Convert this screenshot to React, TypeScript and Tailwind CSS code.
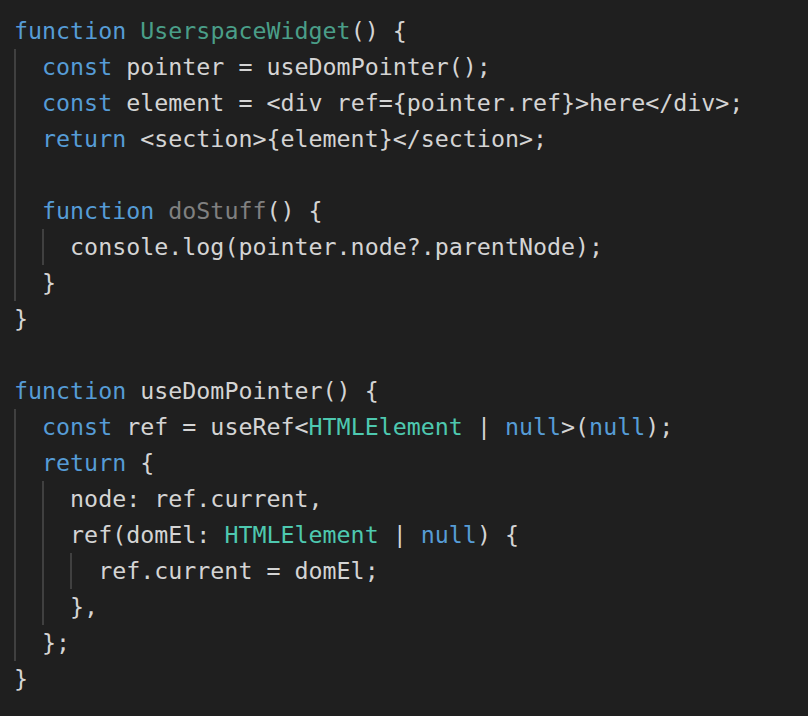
type Tok = [string, string?];

const KW = "text-[#569cd6]";
const TY = "text-[#4ec9b0]";
const FN = "text-[#4a9e88]";
const DIM = "text-[#808080]";

// each line: indent level, then tokens
const lines: { indent: number; toks: Tok[] }[] = [
  { indent: 0, toks: [["function", KW], [" "], ["UserspaceWidget", FN], ["() {"]] },
  { indent: 1, toks: [["const", KW], [" pointer = useDomPointer();"]] },
  { indent: 1, toks: [["const", KW], [" element = <div ref={pointer.ref}>here</div>;"]] },
  { indent: 1, toks: [["return", KW], [" <section>{element}</section>;"]] },
  { indent: 1, toks: [] },
  { indent: 1, toks: [["function", KW], [" "], ["doStuff", DIM], ["() {"]] },
  { indent: 2, toks: [["console.log(pointer.node?.parentNode);"]] },
  { indent: 1, toks: [["}"]] },
  { indent: 0, toks: [["}"]] },
  { indent: 0, toks: [] },
  { indent: 0, toks: [["function", KW], [" useDomPointer() {"]] },
  { indent: 1, toks: [["const", KW], [" ref = useRef<"], ["HTMLElement", TY], [" | "], ["null", KW], [">("], ["null", KW], [");"]] },
  { indent: 1, toks: [["return", KW], [" {"]] },
  { indent: 2, toks: [["node: ref.current,"]] },
  { indent: 2, toks: [["ref(domEl: "], ["HTMLElement", TY], [" | "], ["null", KW], [") {"]] },
  { indent: 3, toks: [["ref.current = domEl;"]] },
  { indent: 2, toks: [["},"]] },
  { indent: 1, toks: [["};"]] },
  { indent: 0, toks: [["}"]] },
];

const CodeLine = ({ indent, toks }: { indent: number; toks: Tok[] }) => (
  <div className="flex h-[36px] items-center whitespace-pre">
    {Array.from({ length: indent }).map((_, i) => (
      <span key={i} className="self-stretch w-[2ch] shrink-0 border-l-2 border-[#404040]" />
    ))}
    {toks.map(([text, cls], i) => (
      <span key={i} className={cls ?? "text-[#d4d4d4]"}>
        {text}
      </span>
    ))}
  </div>
);

export default function App() {
  return (
    <div className="w-[808px] h-[716px] bg-[#1f1f1f] pl-[14px] pt-[13px] overflow-hidden font-['DejaVu_Sans_Mono',monospace] text-[23.3px]">
      {lines.map((l, i) => (
        <CodeLine key={i} indent={l.indent} toks={l.toks} />
      ))}
    </div>
  );
}
